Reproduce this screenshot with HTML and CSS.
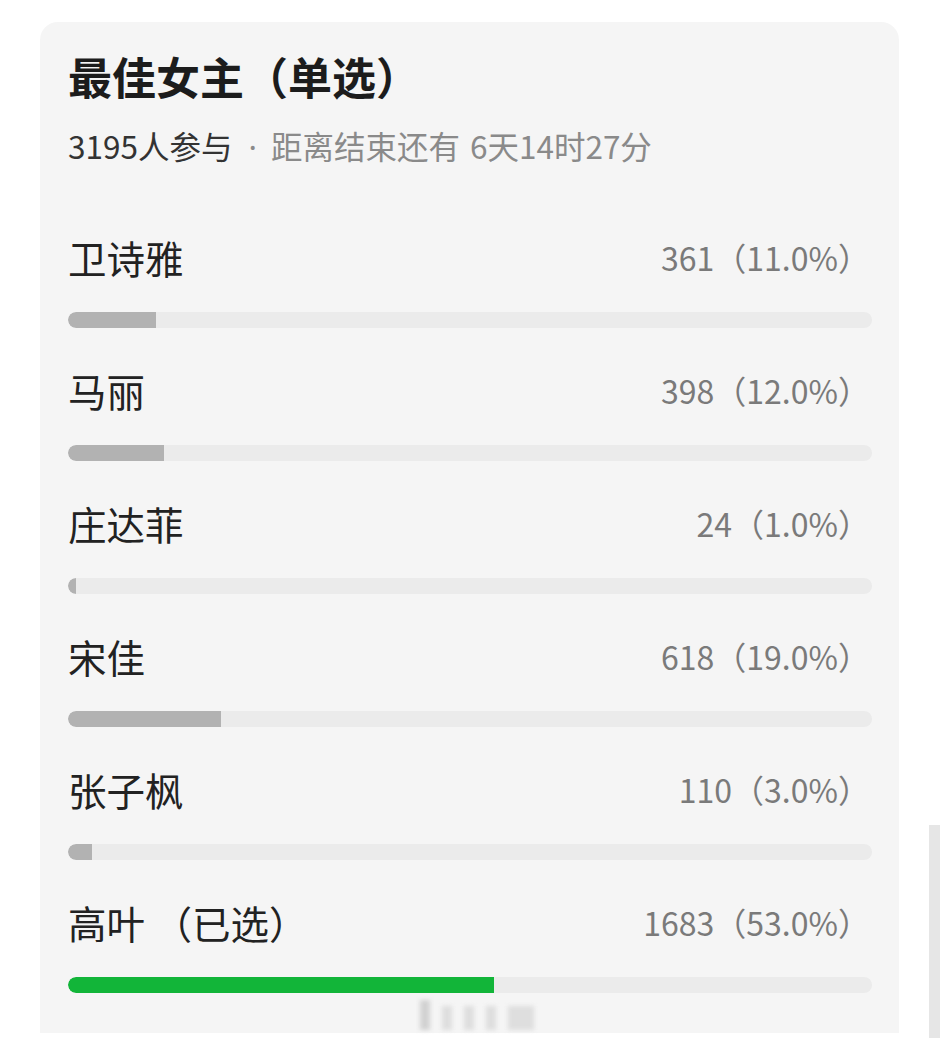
FILE: index.html
```html
<!DOCTYPE html>
<html lang="zh-CN">
<head>
    <meta charset="UTF-8">
    <meta name="viewport" content="width=device-width, initial-scale=1.0">
    <title>最佳女主（单选）</title>
    <link rel="stylesheet" href="styles.css">
</head>
<body>

    <div class="poll">
        <h1 class="poll-title">最佳女主（单选）</h1>
        <p class="poll-meta"><span class="count">3195人参与</span><span class="sep">·</span>距离结束还有 6天14时27分</p>

        <div class="option">
            <div class="option-head">
                <span class="option-name">卫诗雅</span>
                <span class="option-votes">361（11.0%）</span>
            </div>
            <div class="track"><div class="fill" style="width: 11%;"></div></div>
        </div>

        <div class="option">
            <div class="option-head">
                <span class="option-name">马丽</span>
                <span class="option-votes">398（12.0%）</span>
            </div>
            <div class="track"><div class="fill" style="width: 12%;"></div></div>
        </div>

        <div class="option">
            <div class="option-head">
                <span class="option-name">庄达菲</span>
                <span class="option-votes">24（1.0%）</span>
            </div>
            <div class="track"><div class="fill" style="width: 1%;"></div></div>
        </div>

        <div class="option">
            <div class="option-head">
                <span class="option-name">宋佳</span>
                <span class="option-votes">618（19.0%）</span>
            </div>
            <div class="track"><div class="fill" style="width: 19%;"></div></div>
        </div>

        <div class="option">
            <div class="option-head">
                <span class="option-name">张子枫</span>
                <span class="option-votes">110（3.0%）</span>
            </div>
            <div class="track"><div class="fill" style="width: 3%;"></div></div>
        </div>

        <div class="option selected">
            <div class="option-head">
                <span class="option-name">高叶 （已选）</span>
                <span class="option-votes">1683（53.0%）</span>
            </div>
            <div class="track"><div class="fill" style="width: 53%;"></div></div>
        </div>
    </div>

    <!-- blurred watermark + scrollbar edge from the screenshot -->
    <div class="watermark">
        <span class="mark tall"></span>
        <span class="mark"></span>
        <span class="mark"></span>
        <span class="mark"></span>
        <span class="mark wide"></span>
    </div>
    <div class="edge"></div>

</body>
</html>
```

FILE: styles.css
```css
body {
    margin: 0;
    background-color: #ffffff;
    font-family: "Noto Sans CJK SC", "Noto Sans", sans-serif;
    color: #222222;
    position: relative;
    height: 1038px;
    overflow: hidden;
}
.poll {
    margin: 22px 0 0 40px;
    width: 859px;
    box-sizing: border-box;
    padding: 24px 27px 40px 28px;
    background-color: #f5f5f5;
    border-radius: 18px 18px 0 0;
}
.poll-title {
    margin: 0;
    font-size: 44px;
    line-height: 60px;
    font-weight: 700;
    color: #1c1c1c;
}
.poll-meta {
    margin: 19px 0 0;
    height: 40px;
    font-size: 31.5px;
    line-height: 40px;
    color: #8a8a8a;
    word-spacing: 3px;
}
.poll-meta .count {
    color: #333333;
}
.poll-meta .sep {
    font-family: "Noto Sans", sans-serif;
    margin: 0 14px 0 16px;
}
.option {
    padding-top: 39px;
}
.poll-meta + .option {
    padding-top: 69px;
}
.option-head {
    display: flex;
    justify-content: space-between;
    align-items: center;
    height: 50px;
    padding-right: 2px;
}
.option-name {
    font-size: 38.5px;
    line-height: 50px;
    margin-top: -4px;
    color: #222222;
}
.option-votes {
    font-size: 32px;
    line-height: 50px;
    margin-top: -4px;
    color: #7a7a7a;
}
.track {
    margin-top: 28px;
    height: 16px;
    border-radius: 8px;
    background-color: #ebebeb;
    overflow: hidden;
}
.fill {
    height: 100%;
    min-width: 5px;
    border-radius: 8px 0 0 8px;
    background-color: #b2b2b2;
}
.selected .fill {
    background-color: #12b539;
}
.watermark {
    position: absolute;
    left: 420px;
    top: 1000px;
    display: flex;
    align-items: flex-end;
    gap: 12px;
    filter: blur(2px);
}
.mark {
    width: 10px;
    height: 24px;
    background-color: #dedede;
}
.mark.tall {
    height: 30px;
    background-color: #d2d2d2;
}
.mark.wide {
    width: 26px;
}
.edge {
    position: absolute;
    right: 0;
    top: 825px;
    width: 11px;
    bottom: 0;
    background-color: #e6e6e6;
}
```
